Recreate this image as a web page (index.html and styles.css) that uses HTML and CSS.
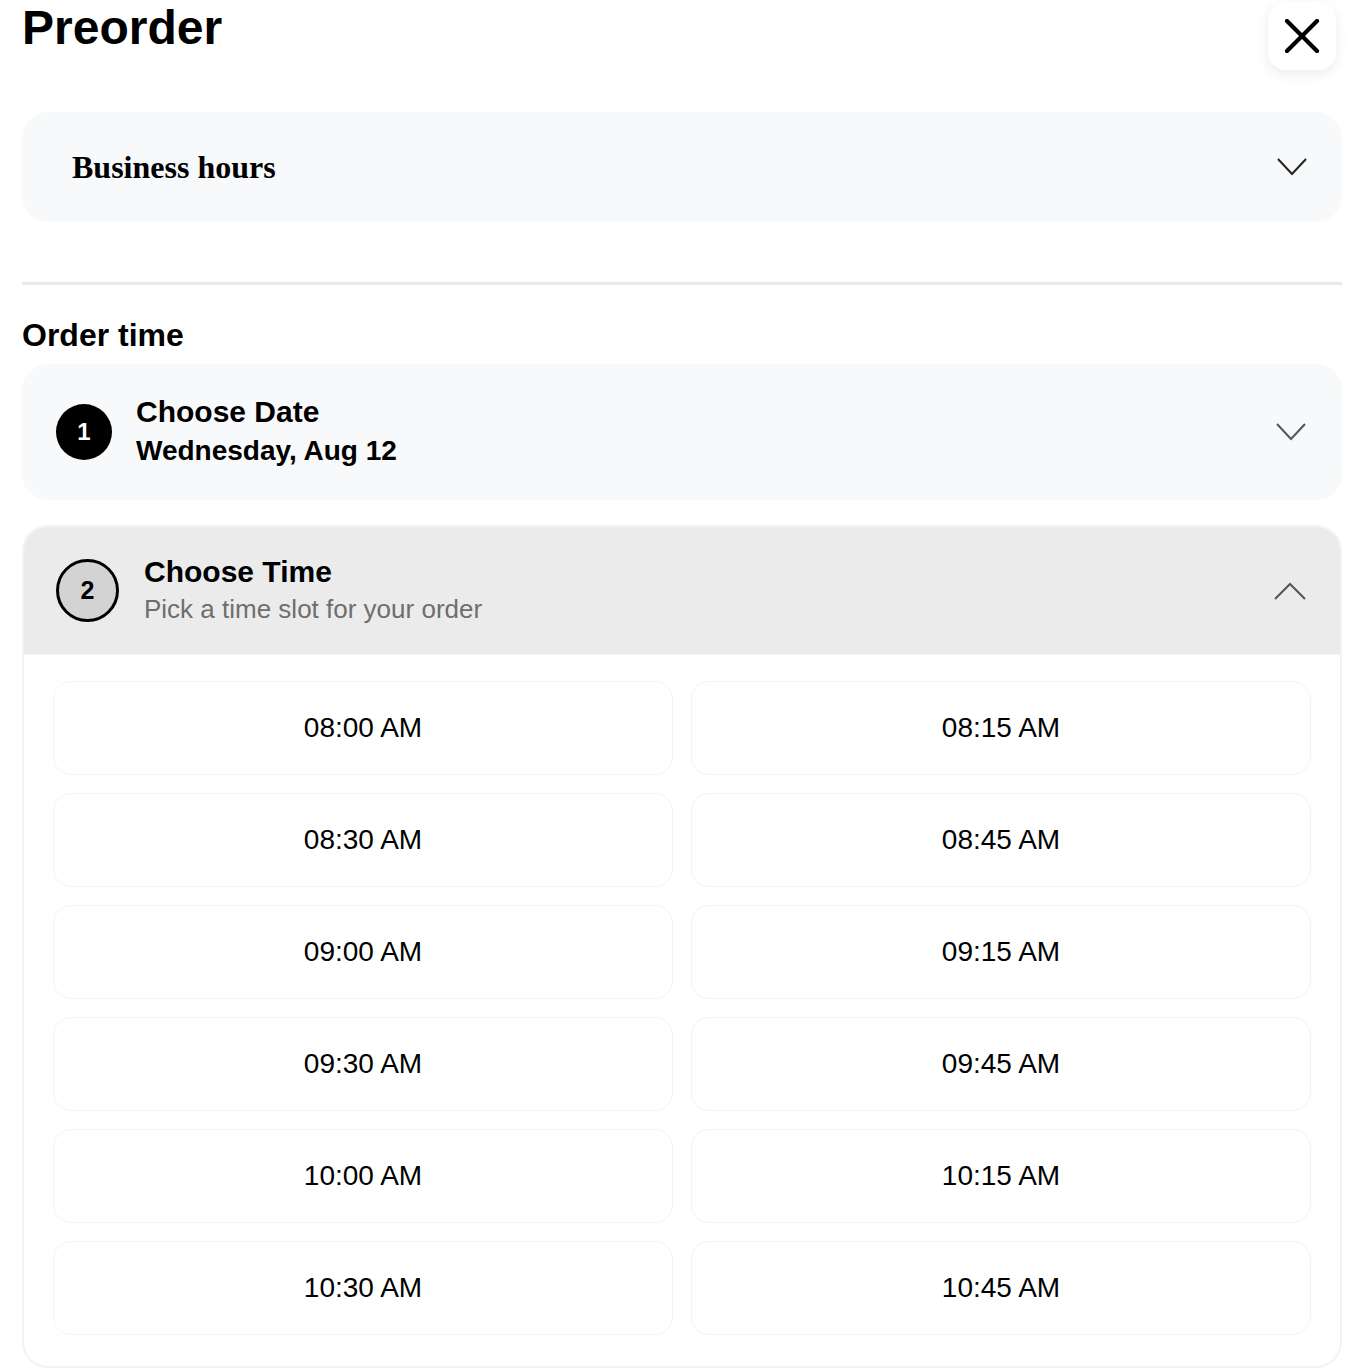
FILE: index.html
```html
<!DOCTYPE html>
<html lang="en">
<head>
<meta charset="utf-8">
<title>Preorder</title>
<link rel="stylesheet" href="styles.css">
</head>
<body>
<div class="page">
  <header class="top">
    <h1 class="title">Preorder</h1>
    <button class="close" aria-label="Close">
      <svg width="34" height="34" viewBox="0 0 34 34"><path d="M2 2 L32 32 M32 2 L2 32" stroke="#000" stroke-width="4.2" stroke-linecap="square" fill="none"/></svg>
    </button>
  </header>

  <section class="card hours">
    <h2 class="hours-title">Business hours</h2>
    <svg class="chev" width="30" height="18" viewBox="0 0 30 18"><polyline points="1,1 15,16 29,1" fill="none" stroke="#222" stroke-width="2"/></svg>
  </section>

  <hr class="divider">

  <h3 class="section-title">Order time</h3>

  <section class="card step">
    <div class="badge badge-done">1</div>
    <div class="step-text">
      <div class="step-title">Choose Date</div>
      <div class="step-value">Wednesday, Aug 12</div>
    </div>
    <svg class="chev" width="30" height="18" viewBox="0 0 30 18"><polyline points="1,1 15,16 29,1" fill="none" stroke="#555" stroke-width="2"/></svg>
  </section>

  <section class="time-card">
    <div class="time-head">
      <div class="badge badge-active">2</div>
      <div class="step-text">
        <div class="step-title">Choose Time</div>
        <div class="step-sub">Pick a time slot for your order</div>
      </div>
      <svg class="chev" width="32" height="18" viewBox="0 0 32 18"><polyline points="1,17 16,2 31,17" fill="none" stroke="#555" stroke-width="2"/></svg>
    </div>
    <div class="slots">
      <button class="slot">08:00 AM</button>
      <button class="slot">08:15 AM</button>
      <button class="slot">08:30 AM</button>
      <button class="slot">08:45 AM</button>
      <button class="slot">09:00 AM</button>
      <button class="slot">09:15 AM</button>
      <button class="slot">09:30 AM</button>
      <button class="slot">09:45 AM</button>
      <button class="slot">10:00 AM</button>
      <button class="slot">10:15 AM</button>
      <button class="slot">10:30 AM</button>
      <button class="slot">10:45 AM</button>
    </div>
  </section>
</div>
</body>
</html>
```

FILE: styles.css
```css
* { box-sizing: border-box; }
html, body { margin: 0; padding: 0; background: #fff; }
body {
  font-family: "Liberation Sans", Arial, Helvetica, sans-serif;
  color: #000;
}
.page {
  padding: 0 20px 0 22px;
}
.top {
  display: flex;
  justify-content: space-between;
  align-items: flex-start;
  height: 70px;
}
.title {
  margin: 0;
  font-size: 48px;
  font-weight: 700;
  line-height: 55px;
}
.close {
  margin: 2px 6px 0 0;
  width: 68px;
  height: 68px;
  border: none;
  border-radius: 18px;
  background: #fff;
  box-shadow: 0 4px 14px rgba(0,0,0,0.08);
  display: flex;
  align-items: center;
  justify-content: center;
  padding: 0;
}
.card {
  background: #f8f9fa;
  border-radius: 26px;
  display: flex;
  align-items: center;
}
.hours {
  margin-top: 42px;
  height: 110px;
  padding: 0 35px 0 50px;
}
.hours-title {
  margin: 0;
  flex: 1;
  font-family: "Liberation Serif", "Times New Roman", serif;
  font-size: 32px;
  font-weight: 700;
}
.chev { flex: none; display: block; }
.divider {
  margin: 60px 0 0;
  border: none;
  height: 3px;
  background: #e8e9eb;
}
.section-title {
  margin: 32px 0 0;
  font-size: 32px;
  font-weight: 700;
  line-height: 37px;
}
.step {
  margin-top: 10px;
  height: 136px;
  padding: 0 36px 0 34px;
}
.badge {
  flex: none;
  border-radius: 50%;
  display: flex;
  align-items: center;
  justify-content: center;
  font-weight: 700;
}
.badge-done {
  width: 56px;
  height: 56px;
  background: #000;
  color: #fff;
  font-size: 24px;
}
.badge-active {
  width: 63px;
  height: 63px;
  background: #d3d3d3;
  border: 3.5px solid #000;
  color: #000;
  font-size: 25px;
}
.step-text {
  flex: 1;
  margin-left: 24px;
  padding-bottom: 2px;
}
.step-title {
  font-size: 30px;
  font-weight: 700;
  line-height: 39px;
}
.step-value {
  font-size: 28px;
  font-weight: 700;
  line-height: 39px;
}
.step-sub {
  font-size: 26px;
  line-height: 37px;
  color: #6e6e6e;
}
.time-card {
  margin-top: 25px;
  border: 2px solid #f3f3f3;
  border-radius: 26px;
  overflow: hidden;
  background: #fff;
}
.time-head {
  display: flex;
  align-items: center;
  height: 128px;
  background: #ebebeb;
  border-bottom: 1px solid #f2f2f2;
  padding: 0 34px 0 32px;
}
.time-head .step-text { margin-left: 25px; }
.slots {
  display: grid;
  grid-template-columns: 1fr 1fr;
  gap: 18px;
  padding: 26px 29px 31px 29px;
}
.slot {
  height: 94px;
  border: 1.5px solid #f3f3f3;
  border-radius: 18px;
  background: #fff;
  font-family: "Liberation Sans", Arial, Helvetica, sans-serif;
  font-size: 28px;
  color: #000;
  padding: 0;
}
```
